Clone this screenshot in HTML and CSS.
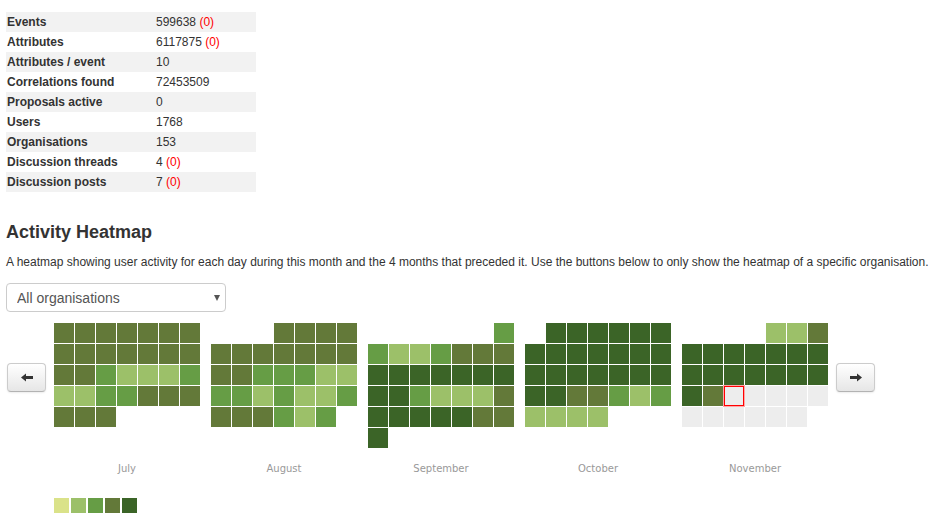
FILE: index.html
```html
<!DOCTYPE html>
<html lang="en">
<head>
<meta charset="utf-8">
<title>Statistics</title>
<link rel="stylesheet" href="styles.css">
</head>
<body>
<div class="page">
  <table class="stats">
    <tr><td class="k">Events</td><td class="v">599638 <span class="red">(0)</span></td></tr>
    <tr><td class="k">Attributes</td><td class="v">6117875 <span class="red">(0)</span></td></tr>
    <tr><td class="k">Attributes / event</td><td class="v">10</td></tr>
    <tr><td class="k">Correlations found</td><td class="v">72453509</td></tr>
    <tr><td class="k">Proposals active</td><td class="v">0</td></tr>
    <tr><td class="k">Users</td><td class="v">1768</td></tr>
    <tr><td class="k">Organisations</td><td class="v">153</td></tr>
    <tr><td class="k">Discussion threads</td><td class="v">4 <span class="red">(0)</span></td></tr>
    <tr><td class="k">Discussion posts</td><td class="v">7 <span class="red">(0)</span></td></tr>
  </table>

  <h3 class="title">Activity Heatmap</h3>
  <p class="desc">A heatmap showing user activity for each day during this month and the 4 months that preceded it. Use the buttons below to only show the heatmap of a specific organisation.</p>

  <div class="sel-wrap">
    <select class="sel"><option>All organisations</option></select>
  </div>

  <div class="heat">
    <button class="nav prev" type="button" aria-label="Previous">
      <svg width="12" height="9" viewBox="0 0 12 9"><path d="M0 4.5 L5 0.5 L5 3 L12 3 L12 6 L5 6 L5 8.5 Z" fill="#333"/></svg>
    </button>
    <div class="months">
      <div class="month">
        <div class="grid">
          <i class="o"></i><i class="o"></i><i class="o"></i><i class="o"></i><i class="o"></i><i class="o"></i><i class="o"></i>
          <i class="o"></i><i class="o"></i><i class="o"></i><i class="o"></i><i class="o"></i><i class="o"></i><i class="o"></i>
          <i class="o"></i><i class="o"></i><i class="m"></i><i class="l"></i><i class="l"></i><i class="l"></i><i class="m"></i>
          <i class="l"></i><i class="l"></i><i class="m"></i><i class="m"></i><i class="o"></i><i class="o"></i><i class="o"></i>
          <i class="o"></i><i class="o"></i><i class="o"></i>
        </div>
        <div class="label">July</div>
      </div>
      <div class="month">
        <div class="grid">
          <i class="o s4"></i><i class="o"></i><i class="o"></i><i class="o"></i>
          <i class="o"></i><i class="o"></i><i class="o"></i><i class="o"></i><i class="o"></i><i class="o"></i><i class="o"></i>
          <i class="o"></i><i class="o"></i><i class="m"></i><i class="m"></i><i class="m"></i><i class="l"></i><i class="l"></i>
          <i class="m"></i><i class="m"></i><i class="l"></i><i class="m"></i><i class="l"></i><i class="l"></i><i class="m"></i>
          <i class="o"></i><i class="o"></i><i class="o"></i><i class="m"></i><i class="l"></i><i class="m"></i>
        </div>
        <div class="label">August</div>
      </div>
      <div class="month">
        <div class="grid">
          <i class="m s7"></i>
          <i class="m"></i><i class="l"></i><i class="l"></i><i class="m"></i><i class="o"></i><i class="o"></i><i class="o"></i>
          <i class="d"></i><i class="d"></i><i class="d"></i><i class="d"></i><i class="d"></i><i class="d"></i><i class="d"></i>
          <i class="d"></i><i class="d"></i><i class="m"></i><i class="l"></i><i class="l"></i><i class="l"></i><i class="o"></i>
          <i class="d"></i><i class="d"></i><i class="d"></i><i class="d"></i><i class="d"></i><i class="o"></i><i class="o"></i>
          <i class="d"></i>
        </div>
        <div class="label">September</div>
      </div>
      <div class="month">
        <div class="grid">
          <i class="d s2"></i><i class="d"></i><i class="d"></i><i class="d"></i><i class="d"></i><i class="d"></i>
          <i class="d"></i><i class="d"></i><i class="d"></i><i class="d"></i><i class="d"></i><i class="d"></i><i class="d"></i>
          <i class="d"></i><i class="d"></i><i class="d"></i><i class="d"></i><i class="d"></i><i class="d"></i><i class="d"></i>
          <i class="d"></i><i class="d"></i><i class="o"></i><i class="o"></i><i class="m"></i><i class="l"></i><i class="m"></i>
          <i class="l"></i><i class="l"></i><i class="l"></i><i class="l"></i>
        </div>
        <div class="label">October</div>
      </div>
      <div class="month">
        <div class="grid">
          <i class="l s5"></i><i class="l"></i><i class="o"></i>
          <i class="d"></i><i class="d"></i><i class="d"></i><i class="d"></i><i class="d"></i><i class="d"></i><i class="d"></i>
          <i class="d"></i><i class="d"></i><i class="d"></i><i class="d"></i><i class="d"></i><i class="d"></i><i class="d"></i>
          <i class="d"></i><i class="o"></i><i class="e now"></i><i class="e"></i><i class="e"></i><i class="e"></i><i class="e"></i>
          <i class="e"></i><i class="e"></i><i class="e"></i><i class="e"></i><i class="e"></i><i class="e"></i>
        </div>
        <div class="label">November</div>
      </div>
    </div>
    <button class="nav next" type="button" aria-label="Next">
      <svg width="12" height="9" viewBox="0 0 12 9"><path d="M12 4.5 L7 0.5 L7 3 L0 3 L0 6 L7 6 L7 8.5 Z" fill="#333"/></svg>
    </button>
  </div>

  <div class="legend">
    <i class="q1"></i><i class="l"></i><i class="m"></i><i class="o"></i><i class="d"></i>
  </div>
</div>
</body>
</html>
```
FILE: styles.css
```css
body {
  margin: 0;
  background: #fff;
  color: #333;
  font-family: "Liberation Sans", Arial, sans-serif;
  font-size: 12px;
}

.page {
  padding: 12px 6px 0;
}

.stats {
  border-collapse: collapse;
  width: 250px;
}

.stats td {
  height: 20px;
  line-height: 20px;
  padding: 0;
  vertical-align: middle;
}

.stats tr:nth-child(odd) td {
  background: #f2f2f2;
}

.stats .k {
  width: 149px;
  padding-left: 1px;
  font-weight: bold;
}

.red {
  color: #f00;
}

.title {
  margin: 30px 0 0;
  font-size: 18px;
  line-height: 20px;
  font-weight: bold;
}

.desc {
  margin: 10px 0 0;
  line-height: 20px;
}

.sel-wrap {
  position: relative;
  margin-top: 11px;
  width: 220px;
  height: 29px;
}

.sel {
  -webkit-appearance: none;
  appearance: none;
  box-sizing: border-box;
  width: 220px;
  height: 29px;
  margin: 0;
  padding: 0 0 0 10px;
  border: 1px solid #ccc;
  border-radius: 4px;
  background: #fff;
  color: #555;
  font-family: "Liberation Sans", Arial, sans-serif;
  font-size: 14px;
}

.sel-wrap::after {
  content: "";
  position: absolute;
  right: 6px;
  top: 12px;
  border-left: 3.5px solid transparent;
  border-right: 3.5px solid transparent;
  border-top: 6px solid #555;
  pointer-events: none;
}

.heat {
  display: flex;
  align-items: flex-start;
  margin-top: 11px;
}

.nav {
  box-sizing: border-box;
  width: 39px;
  height: 29px;
  margin-top: 40px;
  padding: 0;
  display: flex;
  align-items: center;
  justify-content: center;
  border: 1px solid #ccc;
  border-bottom-color: #b3b3b3;
  border-radius: 4px;
  background: linear-gradient(#ffffff, #e6e6e6);
  box-shadow: inset 0 1px 0 rgba(255, 255, 255, 0.2), 0 1px 2px rgba(0, 0, 0, 0.08);
}

.nav.prev {
  margin-left: 1px;
  margin-right: 8px;
}

.nav.next {
  margin-left: 8px;
}

.months {
  display: flex;
  gap: 11px;
}

.month {
  width: 146px;
}

.grid {
  display: grid;
  grid-template-columns: repeat(7, 20px);
  grid-auto-rows: 20px;
  gap: 1px;
  height: 125px;
  align-content: start;
}

.grid i,
.legend i {
  display: block;
}

.s2 { grid-column-start: 2; }
.s4 { grid-column-start: 4; }
.s5 { grid-column-start: 5; }
.s7 { grid-column-start: 7; }

.q1 { background: #dae289; }
.l { background: #9cc069; }
.m { background: #669d45; }
.o { background: #637939; }
.d { background: #3b6427; }
.e { background: #ededed; }

.now {
  box-shadow: inset 0 0 0 1px #f00, 0 0 0 1px rgba(255, 0, 0, 0.35);
}

.label {
  margin-top: 14px;
  text-align: center;
  font-family: "DejaVu Sans", Verdana, sans-serif;
  font-size: 10px;
  line-height: 14px;
  color: #999;
}

.legend {
  display: flex;
  gap: 2px;
  margin: 22px 0 0 48px;
}

.legend i {
  width: 15px;
  height: 15px;
}
```
